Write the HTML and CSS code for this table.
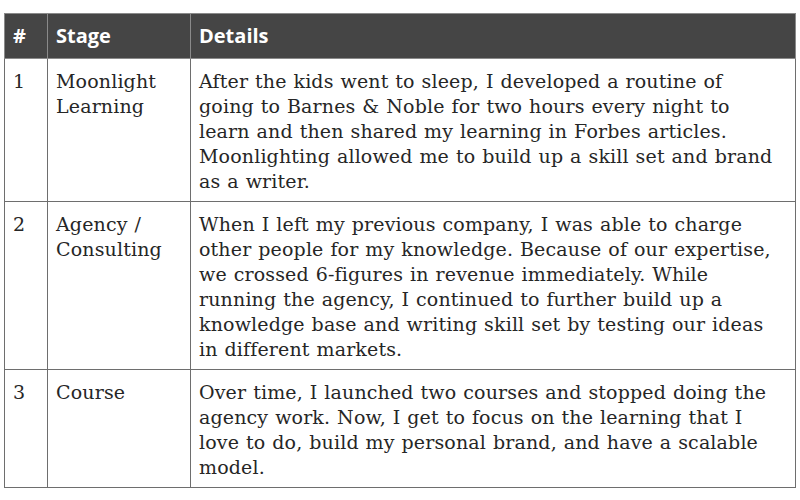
FILE: index.html
```html
<!DOCTYPE html>
<html>
<head>
<meta charset="utf-8">
<link rel="stylesheet" href="styles.css">
</head>
<body>
<table class="stages">
  <colgroup>
    <col class="c-num">
    <col class="c-stage">
    <col class="c-details">
  </colgroup>
  <thead>
    <tr><th>#</th><th>Stage</th><th>Details</th></tr>
  </thead>
  <tbody>
    <tr class="r1">
      <td>1</td>
      <td>Moonlight<br>Learning</td>
      <td>After the kids went to sleep, I developed a routine of<br>going to Barnes &amp; Noble for two hours every night to<br>learn and then shared my learning in Forbes articles.<br>Moonlighting allowed me to build up a skill set and brand<br>as a writer.</td>
    </tr>
    <tr class="r2">
      <td>2</td>
      <td>Agency /<br>Consulting</td>
      <td>When I left my previous company, I was able to charge<br>other people for my knowledge. Because of our expertise,<br>we crossed 6-figures in revenue immediately. While<br>running the agency, I continued to further build up a<br>knowledge base and writing skill set by testing our ideas<br>in different markets.</td>
    </tr>
    <tr class="r3">
      <td>3</td>
      <td>Course</td>
      <td>Over time, I launched two courses and stopped doing the<br>agency work. Now, I get to focus on the learning that I<br>love to do, build my personal brand, and have a scalable<br>model.</td>
    </tr>
  </tbody>
</table>
</body>
</html>
```
FILE: styles.css
```css
html, body {
  margin: 0;
  padding: 0;
  background: #ffffff;
}
body {
  padding: 13px 4px 0 4px;
}
.stages {
  width: 792px;
  border-collapse: collapse;
  table-layout: fixed;
  font-family: "DejaVu Serif", serif;
  font-size: 19px;
  line-height: 25px;
  letter-spacing: 0.15px;
  word-spacing: 0.7px;
  color: #262626;
}
.c-num { width: 43px; }
.c-stage { width: 143px; }
.stages th {
  background: #454545;
  color: #ffffff;
  font-family: "Open Sans", "Noto Sans", sans-serif;
  font-weight: 700;
  font-size: 20px;
  letter-spacing: 0;
  word-spacing: 0;
  text-align: left;
  height: 45px;
  padding: 0 8px 2px 8px;
  border: 1px solid #8a8a8a;
  box-sizing: border-box;
}
.stages td {
  vertical-align: top;
  padding: 10px 4px 7px 8px;
  border: 1px solid #6e6e6e;
}
.r1 td { height: 125px; }
.r2 td { height: 150px; }
.r3 td { height: 100px; }
```
